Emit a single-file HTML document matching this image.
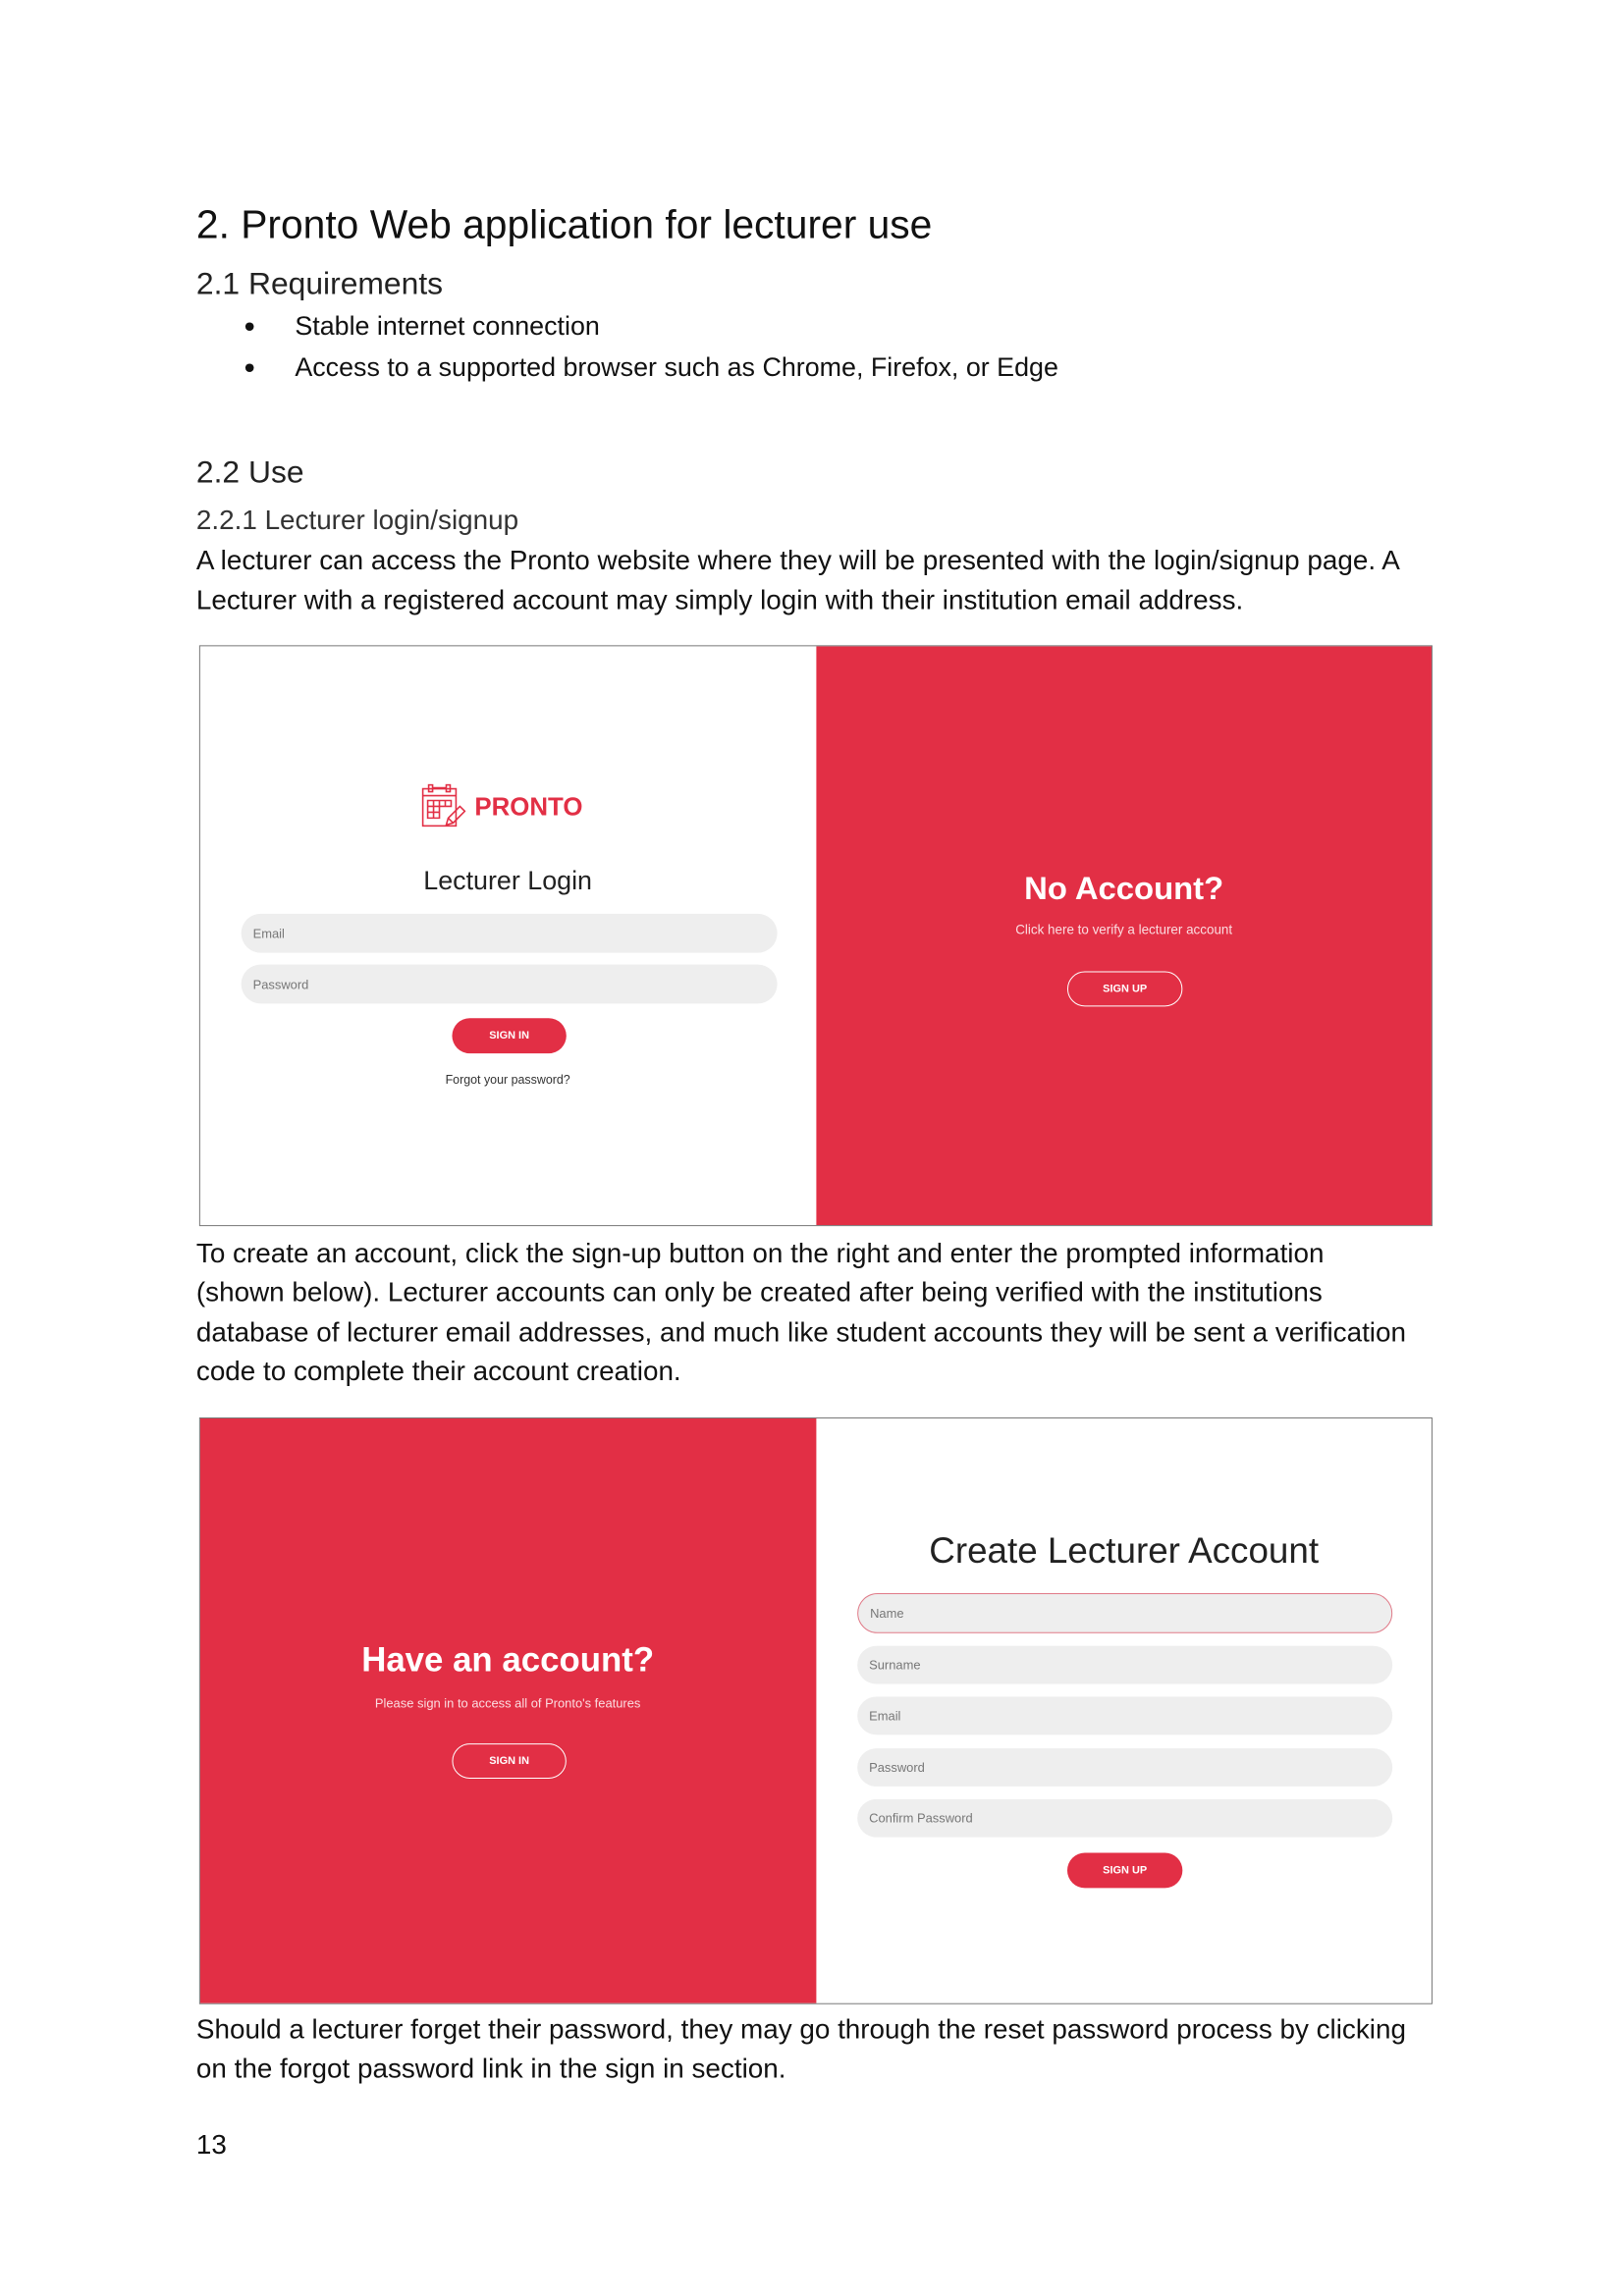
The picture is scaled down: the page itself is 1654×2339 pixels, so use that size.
<!DOCTYPE html>
<html><head><meta charset="utf-8"><style>
*{margin:0;padding:0;box-sizing:border-box}
body{width:1654px;height:2339px;background:#fff;position:relative;font-family:"Liberation Sans",sans-serif;color:#111;overflow:hidden}
#w{position:absolute;left:0;top:0;width:1654px;height:2339px;transform:scale(0.9945);transform-origin:0 0}
.a{position:absolute;white-space:nowrap}
.t{font-size:28px;line-height:40px;left:201px}
.box{position:absolute;left:204px;width:1263px;border:1.5px solid #777;overflow:hidden;background:#fff}
.red{background:#e22f45}
.c{position:absolute;text-align:center;white-space:nowrap;transform:translateX(-50%)}
.inp{position:absolute;background:#eee;border-radius:22px;font-size:13px;color:#777;padding-left:12px;display:flex;align-items:center}
.btn{position:absolute;border-radius:18px;font-size:11px;font-weight:bold;color:#fff;display:flex;align-items:center;justify-content:center}
</style></head><body><div id="w">
<div class="a" style="left:201px;top:205px;font-size:41px;line-height:50px">2. Pronto Web application for lecturer use</div>
<div class="a" style="left:201px;top:270px;font-size:32px;line-height:40px;color:#222">2.1 Requirements</div>
<div class="a" style="left:250px;top:314px;font-size:32px;line-height:40px">•</div>
<div class="a t" style="left:302px;top:314px;font-size:27px">Stable internet connection</div>
<div class="a" style="left:250px;top:356px;font-size:32px;line-height:40px">•</div>
<div class="a t" style="left:302px;top:356px;font-size:27px">Access to a supported browser such as Chrome, Firefox, or Edge</div>
<div class="a" style="left:201px;top:463px;font-size:32px;line-height:40px;color:#222">2.2 Use</div>
<div class="a" style="left:201px;top:516px;font-size:28px;line-height:34px;color:#333">2.2.1 Lecturer login/signup</div>
<div class="a t" style="top:554px">A lecturer can access the Pronto website where they will be presented with the login/signup page. A</div>
<div class="a t" style="top:595px">Lecturer with a registered account may simply login with their institution email address.</div>

<div class="box" style="top:661px;height:595px">
  <div class="red" style="position:absolute;left:631px;top:0;width:632px;height:100%"></div>
  <svg style="position:absolute;left:226px;top:141px" width="46" height="46" viewBox="0 0 46 46" fill="none" stroke="#e22f45" stroke-width="1.6">
    <rect x="2" y="5" width="34" height="38"/><line x1="2" y1="12" x2="36" y2="12"/>
    <rect x="8" y="1" width="4" height="7"/><rect x="26" y="1" width="4" height="7"/><line x1="12" y1="4" x2="26" y2="4"/>
    <path d="M7 17h24v6H19v12H7z M7 23h12 M7 29h12 M13 17v18 M19 17v6 M25 17v6"/>
    <path d="M26 42l2-7 12-12 5 5-12 12z M28 35l5 5"/>
  </svg>
  <div class="a" style="left:281px;top:147px;font-size:26px;font-weight:bold;color:#e22f45;line-height:34px">PRONTO</div>
  <div class="c" style="left:315px;top:224px;font-size:27px;line-height:32px;color:#222">Lecturer Login</div>
  <div class="inp" style="left:42px;top:274px;width:549px;height:40px">Email</div>
  <div class="inp" style="left:42px;top:326px;width:549px;height:40px">Password</div>
  <div class="btn red" style="left:258px;top:381px;width:117px;height:36px">SIGN IN</div>
  <div class="c" style="left:315px;top:437px;font-size:12.5px;color:#333">Forgot your password?</div>
  <div class="c" style="left:946px;top:228px;font-size:33px;font-weight:bold;color:#fff;line-height:40px">No Account?</div>
  <div class="c" style="left:946px;top:283px;font-size:13.5px;color:#fbdde1">Click here to verify a lecturer account</div>
  <div class="btn" style="left:888px;top:333px;width:118px;height:36px;border:1.5px solid #fff">SIGN UP</div>
</div>

<div class="a t" style="top:1264px">To create an account, click the sign-up button on the right and enter the prompted information</div>
<div class="a t" style="top:1304px">(shown below). Lecturer accounts can only be created after being verified with the institutions</div>
<div class="a t" style="top:1345px">database of lecturer email addresses, and much like student accounts they will be sent a verification</div>
<div class="a t" style="top:1385px">code to complete their account creation.</div>

<div class="box" style="top:1452px;height:601px">
  <div class="red" style="position:absolute;left:0;top:0;width:631px;height:100%"></div>
  <div class="c" style="left:315px;top:228px;font-size:35px;font-weight:bold;color:#fff;line-height:40px">Have an account?</div>
  <div class="c" style="left:315px;top:284px;font-size:13px;color:#fbdde1">Please sign in to access all of Pronto's features</div>
  <div class="btn" style="left:258px;top:333px;width:117px;height:36px;border:1.5px solid #fff">SIGN IN</div>
  <div class="c" style="left:946px;top:116px;font-size:37px;color:#222;line-height:40px">Create Lecturer Account</div>
  <div class="inp" style="left:673px;top:179px;width:548px;height:41px;border:1.5px solid #e07a88">Name</div>
  <div class="inp" style="left:673px;top:233px;width:548px;height:39px">Surname</div>
  <div class="inp" style="left:673px;top:285px;width:548px;height:39px">Email</div>
  <div class="inp" style="left:673px;top:338px;width:548px;height:39px">Password</div>
  <div class="inp" style="left:673px;top:390px;width:548px;height:39px">Confirm Password</div>
  <div class="btn red" style="left:888px;top:445px;width:118px;height:36px">SIGN UP</div>
</div>

<div class="a t" style="top:2059px">Should a lecturer forget their password, they may go through the reset password process by clicking</div>
<div class="a t" style="top:2099px">on the forgot password link in the sign in section.</div>
<div class="a t" style="top:2177px">13</div>
</div></body></html>
